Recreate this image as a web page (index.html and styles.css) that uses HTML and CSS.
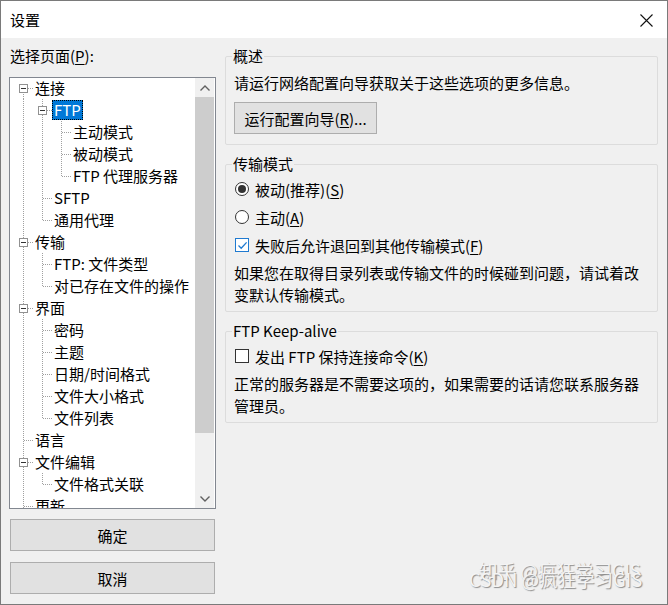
FILE: index.html
```html
<!DOCTYPE html>
<html>
<head>
<meta charset="utf-8">
<link rel="stylesheet" href="styles.css">
</head>
<body>
<div class="window">
    <div class="titlebar">
        <span class="title">设置</span>
        <span class="close">
            <svg width="13" height="13" viewBox="0 0 13 13"><path d="M0.5 0.5 L12.5 12.5 M12.5 0.5 L0.5 12.5" stroke="#111" stroke-width="1.1" fill="none"/></svg>
        </span>
    </div>

    <div class="content">
        <div class="left">
            <div class="label">选择页面(<u>P</u>):</div>
            <div class="tree">
                <div class="tree-list">
                    <div class="row"><span class="col top"><i class="box"></i></span><span class="text">连接</span></div>
                    <div class="row"><span class="col vline"></span><span class="col tee"><i class="box"></i></span><span class="text selected">FTP</span></div>
                    <div class="row"><span class="col vline"></span><span class="col vline"></span><span class="col tee"></span><span class="text">主动模式</span></div>
                    <div class="row"><span class="col vline"></span><span class="col vline"></span><span class="col tee"></span><span class="text">被动模式</span></div>
                    <div class="row"><span class="col vline"></span><span class="col vline"></span><span class="col ell"></span><span class="text">FTP 代理服务器</span></div>
                    <div class="row"><span class="col vline"></span><span class="col tee"></span><span class="text">SFTP</span></div>
                    <div class="row"><span class="col vline"></span><span class="col ell"></span><span class="text">通用代理</span></div>
                    <div class="row"><span class="col tee"><i class="box"></i></span><span class="text">传输</span></div>
                    <div class="row"><span class="col vline"></span><span class="col tee"></span><span class="text">FTP: 文件类型</span></div>
                    <div class="row"><span class="col vline"></span><span class="col ell"></span><span class="text">对已存在文件的操作</span></div>
                    <div class="row"><span class="col tee"><i class="box"></i></span><span class="text">界面</span></div>
                    <div class="row"><span class="col vline"></span><span class="col tee"></span><span class="text">密码</span></div>
                    <div class="row"><span class="col vline"></span><span class="col tee"></span><span class="text">主题</span></div>
                    <div class="row"><span class="col vline"></span><span class="col tee"></span><span class="text">日期/时间格式</span></div>
                    <div class="row"><span class="col vline"></span><span class="col tee"></span><span class="text">文件大小格式</span></div>
                    <div class="row"><span class="col vline"></span><span class="col ell"></span><span class="text">文件列表</span></div>
                    <div class="row"><span class="col tee"></span><span class="text">语言</span></div>
                    <div class="row"><span class="col tee"><i class="box"></i></span><span class="text">文件编辑</span></div>
                    <div class="row"><span class="col vline"></span><span class="col ell"></span><span class="text">文件格式关联</span></div>
                    <div class="row"><span class="col tee"></span><span class="text">更新</span></div>
                </div>
                <div class="scrollbar">
                    <div class="arrow">
                        <svg width="10" height="6" viewBox="0 0 10 6"><path d="M0.5 5.5 L5 1 L9.5 5.5" stroke="#606060" stroke-width="1.4" fill="none"/></svg>
                    </div>
                    <div class="track"><div class="thumb"></div></div>
                    <div class="arrow">
                        <svg width="10" height="6" viewBox="0 0 10 6"><path d="M0.5 0.5 L5 5 L9.5 0.5" stroke="#606060" stroke-width="1.4" fill="none"/></svg>
                    </div>
                </div>
            </div>
            <button class="btn wide">确定</button>
            <button class="btn wide">取消</button>
        </div>

        <div class="right">
            <fieldset class="group first">
                <legend>概述</legend>
                <p class="para">请运行网络配置向导获取关于这些选项的更多信息。</p>
                <button class="btn wizard">运行配置向导(<u>R</u>)...</button>
            </fieldset>

            <fieldset class="group">
                <legend>传输模式</legend>
                <div class="option"><span class="radio checked"></span>被动(推荐)(<u>S</u>)</div>
                <div class="option"><span class="radio"></span>主动(<u>A</u>)</div>
                <div class="option">
                    <span class="check checked">
                        <svg width="11" height="11" viewBox="0 0 11 11"><path d="M1.5 5.5 L4.2 8.2 L9.6 2.4" stroke="#1f7ad0" stroke-width="1.3" fill="none"/></svg>
                    </span>失败后允许退回到其他传输模式(<u>F</u>)
                </div>
                <p class="para note">如果您在取得目录列表或传输文件的时候碰到问题，请试着改变默认传输模式。</p>
            </fieldset>

            <fieldset class="group">
                <legend>FTP Keep-alive</legend>
                <div class="option"><span class="check"></span>发出 FTP 保持连接命令(<u>K</u>)</div>
                <p class="para note">正常的服务器是不需要这项的，如果需要的话请您联系服务器管理员。</p>
            </fieldset>
        </div>
    </div>

    <div class="watermark">
        <span class="wm wm1">知乎 @疯狂学习GIS</span>
        <span class="wm wm2">CSDN @疯狂学习GIS</span>
    </div>
</div>
</body>
</html>
```

FILE: styles.css
```css
* {
    box-sizing: border-box;
}

body {
    margin: 0;
    font-family: "Noto Sans CJK SC", "Noto Sans", sans-serif;
    font-size: 15px;
    color: #000;
}

u {
    text-decoration: underline;
    text-underline-offset: 2px;
}

.window {
    position: relative;
    width: 668px;
    height: 605px;
    border: 1px solid #7a7a7a;
    background: #f0f0f0;
    overflow: hidden;
}

.titlebar {
    height: 37px;
    background: #fff;
    display: flex;
    align-items: center;
    justify-content: space-between;
    padding: 0 14px 0 9px;
}

.title {
    font-size: 15px;
}

.close {
    display: flex;
    margin-top: 1px;
}

.content {
    display: flex;
    gap: 9px;
    padding: 7px 9px 0 8px;
}

/* left column */
.left {
    width: 207px;
    display: flex;
    flex-direction: column;
}

.label {
    height: 22px;
    line-height: 22px;
    margin-bottom: 10px;
    padding-left: 1px;
}

.tree {
    height: 432px;
    border: 1px solid #828790;
    background: #fff;
    display: flex;
    overflow: hidden;
}

.tree-list {
    flex: 1;
    padding-left: 4px;
    margin-top: -1px;
    overflow: hidden;
}

.row {
    height: 22px;
    display: flex;
    align-items: center;
}

.col {
    width: 19px;
    height: 22px;
    flex-shrink: 0;
    display: flex;
    align-items: center;
    justify-content: center;
    background-repeat: no-repeat;
}

.vline {
    background-image: repeating-linear-gradient(to bottom, #a0a0a0 0 1px, transparent 1px 2px);
    background-position: 9px 0;
    background-size: 1px 100%;
}

.tee {
    background-image:
        repeating-linear-gradient(to bottom, #a0a0a0 0 1px, transparent 1px 2px),
        repeating-linear-gradient(to right, #a0a0a0 0 1px, transparent 1px 2px);
    background-position: 9px 0, 10px 11px;
    background-size: 1px 100%, 9px 1px;
}

.ell {
    background-image:
        repeating-linear-gradient(to bottom, #a0a0a0 0 1px, transparent 1px 2px),
        repeating-linear-gradient(to right, #a0a0a0 0 1px, transparent 1px 2px);
    background-position: 9px 0, 10px 11px;
    background-size: 1px 12px, 9px 1px;
}

.top {
    background-image:
        repeating-linear-gradient(to bottom, #a0a0a0 0 1px, transparent 1px 2px),
        repeating-linear-gradient(to right, #a0a0a0 0 1px, transparent 1px 2px);
    background-position: 9px 11px, 10px 11px;
    background-size: 1px 11px, 9px 1px;
}

.box {
    width: 9px;
    height: 9px;
    margin-left: -1px;
    border: 1px solid #919191;
    background: #fff linear-gradient(#333, #333) center / 5px 1px no-repeat;
}

.text {
    padding: 0 2px;
    line-height: 20px;
    white-space: nowrap;
}

.text.selected {
    background: #0078d7;
    color: #fff;
    outline: 1px dotted #000;
    outline-offset: -1px;
}

.scrollbar {
    width: 19px;
    background: #f0f0f0;
    display: flex;
    flex-direction: column;
    margin-right: 1px;
}

.arrow {
    height: 19px;
    display: flex;
    align-items: center;
    justify-content: center;
}

.track {
    flex: 1;
}

.thumb {
    height: 336px;
    background: #cdcdcd;
}

.btn {
    font-family: inherit;
    font-size: 15px;
    color: #000;
    background: #e1e1e1;
    border: 1px solid #adadad;
    border-radius: 0;
    height: 32px;
    padding: 0;
}

.btn.wide {
    margin: 10px 1px 0;
}

.btn.wide + .btn.wide {
    margin-top: 11px;
}

/* right column */
.right {
    flex: 1;
    display: flex;
    flex-direction: column;
    gap: 8px;
}

.group {
    margin: 0;
    border: 1px solid #dcdcdc;
    border-radius: 2px;
    padding: 0 9px 5px 8px;
    min-width: 0;
}

.group.first {
    padding-bottom: 10px;
}

.group legend {
    padding: 0 1px;
    margin-left: -2px;
    line-height: 22px;
}

.para {
    margin: 5px 0 0;
    line-height: 22px;
}

.wizard {
    margin-top: 8px;
    width: 143px;
}

.option {
    height: 28px;
    display: flex;
    align-items: center;
}

.radio {
    width: 14px;
    height: 14px;
    border: 1px solid #333;
    border-radius: 50%;
    background: #fff;
    margin: 0 6px 0 1px;
    display: flex;
    align-items: center;
    justify-content: center;
}

.radio.checked::after {
    content: "";
    width: 8px;
    height: 8px;
    border-radius: 50%;
    background: #333;
}

.check {
    width: 14px;
    height: 14px;
    border: 1px solid #333;
    background: #fff;
    margin: 0 6px 0 1px;
    display: flex;
    align-items: center;
    justify-content: center;
}

.check.checked {
    border-color: #1f7ad0;
}

.note {
    margin-top: 3px;
}

.watermark {
    position: absolute;
    right: 18px;
    bottom: 14px;
    width: 172px;
    height: 24px;
}

.wm {
    position: absolute;
    left: 0;
    font-size: 18.5px;
    color: #f4f4f4;
    text-shadow: 1px 1px 1px #8c8c8c;
    white-space: nowrap;
}

.wm1 {
    top: -9px;
    left: 2px;
}

.wm2 {
    top: 0;
    left: -8px;
}
```
